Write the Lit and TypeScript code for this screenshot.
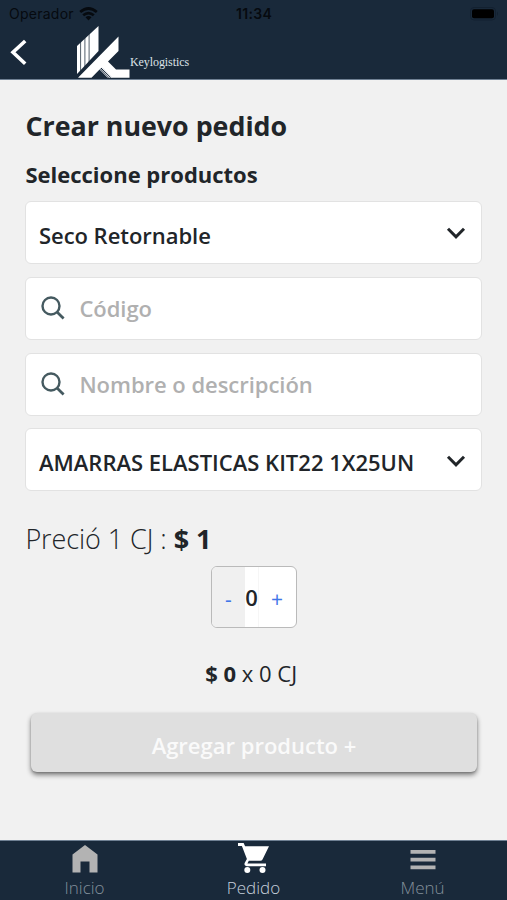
import { LitElement, html, css, svg } from "lit";
import { customElement } from "lit/decorators.js";

const searchIcon = html`<svg class="search" width="24" height="24" viewBox="0 0 24 24">
  <circle cx="10" cy="10" r="8.5" fill="none" stroke="#455a60" stroke-width="2.4" />
  <path d="M16 16L22.6 22.4" stroke="#455a60" stroke-width="2.8" />
</svg>`;

const chevron = html`<svg class="chevron" width="20" height="14" viewBox="0 0 20 14">
  <path d="M2 2.8L10 10.8L18 2.8" fill="none" stroke="#212529" stroke-width="3" />
</svg>`;

@customElement("app-root")
export class AppRoot extends LitElement {
  static styles = css`
    :host {
      display: flex;
      flex-direction: column;
      width: 507px;
      height: 900px;
      overflow: hidden;
      background: #f1f1f1;
      color: #212529;
      font-family: "Open Sans", "Noto Sans", sans-serif;
    }
    * { box-sizing: border-box; }
    svg { display: block; flex: none; }
    span, strong { white-space: pre; }
    strong { font-weight: 700; }
    .top {
      height: 79.5px;
      flex: none;
      background: #19293a;
      border-bottom: 1px solid #6f8093;
    }
    .status {
      display: grid;
      grid-template-columns: 1fr auto 1fr;
      height: 26px;
      padding: 1px 8px 0 9px;
      align-items: center;
      color: #060a0f;
      font: 14px/20px Inter, sans-serif;
    }
    .carrier { display: flex; align-items: center; gap: 5px; letter-spacing: 0.25px; }
    .time { font-weight: 600; letter-spacing: 0.3px; }
    .battery { justify-self: end; }
    .brandbar { display: flex; height: 53px; padding-left: 10px; }
    .back { margin-top: 12px; }
    .logo { margin-left: 49px; }
    .brand {
      color: #dde2e7;
      font: 12px/16px "Liberation Serif", serif;
      margin-top: 28px;
      letter-spacing: -0.08px;
    }
    main { flex: 1; padding: 28px 25px 0 25.4px; }
    h1, h2 { margin: 0; font-weight: 700; }
    h1 { font-size: 26.8px; line-height: 36px; }
    h2 { font-size: 22px; line-height: 30px; margin-top: 15px; }
    .fields { display: grid; gap: 12.8px; margin-top: 12.6px; }
    .field {
      display: flex;
      align-items: center;
      height: 63px;
      padding: 4px 15px 0 12.6px;
      border: 1px solid #e2e2e2;
      border-radius: 6px;
      background: #fff;
      font-size: 22px;
      font-weight: 600;
      letter-spacing: -0.04px;
    }
    .field .label { flex: 1; }
    .amarras { letter-spacing: 0; }
    .chevron { margin-top: -2.6px; }
    .search { margin: -4.6px 14.8px 0 1.6px; }
    .hint { color: #b0b0b0; margin-top: -4px; }
    .price { margin-top: 28.8px; font-size: 27px; line-height: 38px; font-weight: 300; letter-spacing: -0.07px; }
    .stepper {
      display: grid;
      grid-template-columns: 33px 13px 1fr;
      width: 86px;
      height: 62px;
      margin: 8px auto 0 185.6px;
      border: 1.5px solid #bababa;
      border-radius: 6px;
      overflow: hidden;
      background: #fff;
      font-size: 21px;
      line-height: 61px;
      text-align: center;
      color: #3f76e8;
    }
    .minus { background: #f0f0f0; padding-top: 2px; }
    .qty { color: #212529; font-weight: 600; font-size: 22px; display: flex; justify-content: center; }
    .plus { border-left: 1px solid #f6f6f6; padding: 2px 1px 0 0; }
    .total {
      margin: 29.6px 5px 0 0;
      text-align: center;
      font-size: 22px;
      line-height: 30px;
    }
    .add {
      display: block;
      width: 446px;
      height: 59px;
      margin: 25px 0 0 5.6px;
      padding: 5px 0 0;
      border: 0;
      border-radius: 6px;
      background: #dfdfdf;
      box-shadow: 0 3px 5px rgba(0, 0, 0, 0.48), 0 1px 2px rgba(0, 0, 0, 0.15);
      color: #fafafa;
      font: 600 22px/30px "Open Sans", sans-serif;
    }
    nav {
      display: grid;
      grid-template-columns: repeat(3, 1fr);
      flex: none;
      height: 60px;
      background: #19293a;
      border-top: 1px solid #6f8093;
    }
    .tab {
      display: flex;
      flex-direction: column;
      align-items: center;
      color: #84909b;
      font-size: 17px;
      font-weight: 300;
      line-height: 24px;
    }
    .tab svg { height: 35px; }
    .active { color: #c6d0dc; }
  `;

  private tab(label: string, shape: unknown, active = false) {
    return html`<div class="tab ${active ? "active" : ""}">
      <svg width="34" height="35" viewBox="0 0 34 35">${shape}</svg>
      <span>${label}</span>
    </div>`;
  }

  render() {
    return html`
      <header class="top">
        <div class="status">
          <span class="carrier"><span>Operador</span><svg width="19" height="14" viewBox="0 0 19 14">
              <g fill="none" stroke="#060a0f" stroke-width="2.7">
                <path d="M1.2 5.1Q9.5 -2.1 17.8 5.1" />
                <path d="M4.2 8.3Q9.5 3.8 14.8 8.3" />
              </g>
              <path d="M6.5 10.3Q9.5 7.9 12.5 10.3L9.5 13.5Z" fill="#060a0f" />
            </svg></span>
          <span class="time">11:34</span>
          <svg class="battery" width="29" height="14" viewBox="0 0 29 14">
            <rect x="0.5" y="0.5" width="25" height="12.5" rx="3.5" fill="none" stroke="#132130" />
            <rect x="2" y="2.3" width="22" height="9" rx="2" fill="#000" />
            <path d="M27 4.5Q29 6.7 27 9Z" fill="#132130" />
          </svg>
        </div>
        <div class="brandbar">
          <svg class="back" width="18" height="29" viewBox="0 0 18 29">
            <path d="M15.2 3L3 14.3L15.2 25.7" fill="none" stroke="#fff" stroke-width="3.6" />
          </svg>
          <svg class="logo" width="53" height="52" viewBox="0 0 53 52">
            <path fill="#fff" d="M0 20L21.5 0V25L0 48Z" />
            <path d="M3.6 16V46M7.9 12V42M12.1 8V38" stroke="#19293a" stroke-opacity="0.75" stroke-width="1" />
            <path fill="#fff" d="M1 51.7L41.5 10.5V25L31 35.5L39 43.5H52.5V51.7H32L23.5 42.5L14.5 51.7Z" />
            <path d="M0 50L22 27.5" stroke="#19293a" stroke-opacity="0.7" stroke-width="0.8" />
            <path d="M22.5 43L31 51.7M25 41.5L35 51.7" stroke="#d5dbe1" stroke-width="1" />
            <path d="M24 42L33.5 51.7" stroke="#19293a" stroke-width="1" />
          </svg>
          <span class="brand">Keylogistics</span>
        </div>
      </header>
      <main>
        <h1>Crear nuevo pedido</h1>
        <h2>Seleccione productos</h2>
        <div class="fields">
          <div class="field"><span class="label">Seco Retornable</span>${chevron}</div>
          <div class="field">${searchIcon}<span class="hint">Código</span></div>
          <div class="field">${searchIcon}<span class="hint">Nombre o descripción</span></div>
          <div class="field"><span class="label amarras">AMARRAS ELASTICAS KIT22 1X25UN</span>${chevron}</div>
        </div>
        <div class="price"><span>Preció 1 CJ : </span><strong>$ 1</strong></div>
        <div class="stepper">
          <span class="minus">-</span><span class="qty">0</span><span class="plus">+</span>
        </div>
        <div class="total"><strong>$ 0</strong><span> x 0 CJ</span></div>
        <button class="add">Agregar producto +</button>
      </main>
      <nav>
        ${this.tab("Inicio", svg`<path fill="#b3b3b3" d="M4.5 31.5V13.5L17 4L29.5 13.5V31.5H21.5V20.5H12.5V31.5Z"/>`)}
        ${this.tab("Pedido", svg`<g fill="#fff">
          <path d="M1 2H6.6L8.1 5.2H32L25.5 18.5Q24.8 19.8 23.4 19.8H11.8L10.4 22.6H29V25.2H9.8Q6.5 24.6 7.8 21.8L9.9 18L4.9 5H1Z"/>
          <circle cx="10.3" cy="29" r="3"/><circle cx="25.5" cy="29" r="3"/></g>`, true)}
        ${this.tab("Menú", svg`<path fill="#b3b3b3" d="M4.5 9H29.5V12.8H4.5ZM4.5 16.7H29.5V20.5H4.5ZM4.5 24.4H29.5V28.2H4.5Z"/>`)}
      </nav>
    `;
  }
}
